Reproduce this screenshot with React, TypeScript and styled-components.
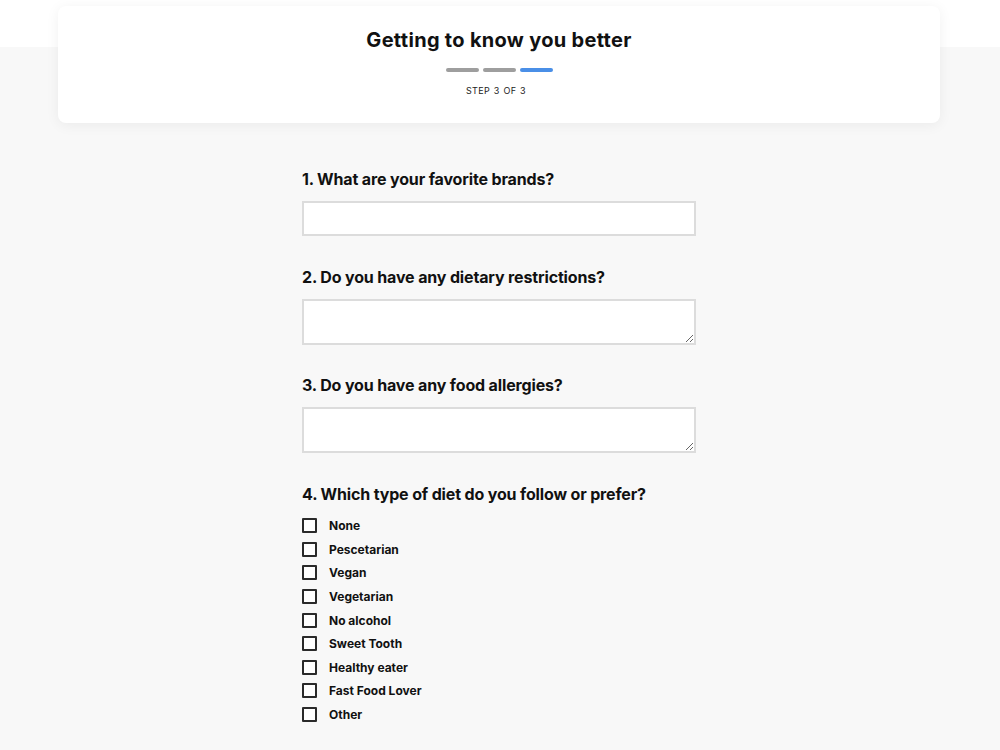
import React from 'react'
import styled, { createGlobalStyle } from 'styled-components'

const GlobalStyle = createGlobalStyle`
  html, body {
    margin: 0;
    padding: 0;
  }
  body {
    font-family: Inter, "Noto Sans", sans-serif;
    color: #111;
    background: linear-gradient(#ffffff 0, #ffffff 47px, #f8f8f8 47px);
    min-height: 750px;
  }
`

const Page = styled.div`
  padding: 6px 60px 40px 58px;
`

const HeaderCard = styled.header`
  background: #fff;
  border-radius: 8px;
  box-shadow: 0 2px 14px rgba(0, 0, 0, 0.06);
  height: 117px;
  box-sizing: border-box;
  padding-top: 22px;
  display: flex;
  flex-direction: column;
  align-items: center;
`

const Title = styled.h1`
  margin: 0;
  font-size: 20px;
  line-height: 24px;
  font-weight: 700;
  letter-spacing: 0.3px;
`

const Steps = styled.div`
  display: flex;
  gap: 4px;
  margin-top: 16px;
`

const StepBar = styled.span<{ $active?: boolean }>`
  width: 33px;
  height: 4px;
  border-radius: 2px;
  background: ${(p) => (p.$active ? '#4a8fe7' : '#9e9e9e')};
`

const StepLabel = styled.div`
  margin-top: 13px;
  margin-right: 6px;
  font-size: 9px;
  letter-spacing: 0.3px;
  word-spacing: 1px;
  color: #222;
`

const Form = styled.form`
  width: 394px;
  margin: 46px auto 0;
  display: flex;
  flex-direction: column;
`

const Question = styled.label`
  display: block;
  font-size: 16px;
  line-height: 20px;
  font-weight: 700;
  letter-spacing: -0.15px;
  margin-bottom: 12px;
`

const TextInput = styled.input`
  box-sizing: border-box;
  width: 394px;
  height: 35px;
  border: 2px solid #dcdcdc;
  background: #fff;
  margin: 0 0 31px;
  outline: none;
`

const TextArea = styled.textarea<{ $gap?: number }>`
  box-sizing: border-box;
  width: 394px;
  height: 46px;
  border: 2px solid #dcdcdc;
  background: #fff;
  margin: 0 0 ${(p) => p.$gap ?? 30}px;
  outline: none;
  display: block;
`

const OptionList = styled.div`
  display: flex;
  flex-direction: column;
  margin-top: -2px;
`

const Option = styled.label`
  display: flex;
  align-items: center;
  height: 23.6px;
  gap: 12px;
  font-size: 12px;
  font-weight: 700;
`

const Box = styled.input`
  appearance: none;
  margin: 0;
  width: 15px;
  height: 15px;
  border: 2px solid #2a2a2a;
  border-radius: 1px;
  background: #fff;
  box-sizing: border-box;
`

const diets = [
  'None',
  'Pescetarian',
  'Vegan',
  'Vegetarian',
  'No alcohol',
  'Sweet Tooth',
  'Healthy eater',
  'Fast Food Lover',
  'Other',
]

export default function App() {
  return (
    <Page>
      <GlobalStyle />
      <HeaderCard>
        <Title>Getting to know you better</Title>
        <Steps>
          <StepBar />
          <StepBar />
          <StepBar $active />
        </Steps>
        <StepLabel>STEP 3 OF 3</StepLabel>
      </HeaderCard>
      <Form>
        <Question>1. What are your favorite brands?</Question>
        <TextInput type="text" />
        <Question>2. Do you have any dietary restrictions?</Question>
        <TextArea />
        <Question>3. Do you have any food allergies?</Question>
        <TextArea $gap={31} />
        <Question>4. Which type of diet do you follow or prefer?</Question>
        <OptionList>
          {diets.map((d) => (
            <Option key={d}>
              <Box type="checkbox" />
              {d}
            </Option>
          ))}
        </OptionList>
      </Form>
    </Page>
  )
}
